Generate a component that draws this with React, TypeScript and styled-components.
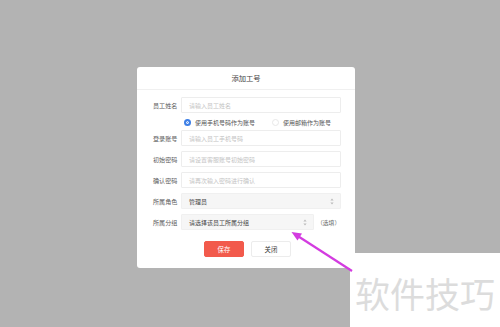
import React from 'react'
import styled, { createGlobalStyle } from 'styled-components'

const GlobalStyle = createGlobalStyle`
  html, body {
    margin: 0;
    padding: 0;
    width: 500px;
    height: 327px;
    overflow: hidden;
    background: #b3b3b3;
    font-family: "Noto Sans CJK SC", "Noto Sans", sans-serif;
  }
`

const Page = styled.div`
  position: relative;
  width: 500px;
  height: 327px;
  padding-top: 67px;
  padding-left: 137px;
  box-sizing: border-box;
`

const Dialog = styled.div`
  width: 218px;
  height: 201px;
  background: #fff;
  border-radius: 3px;
  display: flex;
  flex-direction: column;
`

const Header = styled.div`
  height: 22px;
  border-bottom: 1px solid #f0f0f0;
  display: flex;
  align-items: center;
  justify-content: center;
  font-size: 7.3px;
  color: #444;
`

const Body = styled.div`
  padding: 7px 14px 0 16px;
  display: flex;
  flex-direction: column;
  gap: 5px;
`

const Row = styled.div`
  display: grid;
  grid-template-columns: 28px 160px auto;
  align-items: center;
  height: 16px;
`

const Label = styled.div`
  font-size: 6.1px;
  color: #5c5c5c;
  white-space: nowrap;
`

const Input = styled.div`
  height: 16px;
  box-sizing: border-box;
  border: 1px solid #ededed;
  border-radius: 1px;
  padding-left: 7px;
  display: flex;
  align-items: center;
  font-size: 6px;
  color: #c4c4c4;
  white-space: nowrap;
`

const Select = styled(Input)<{ $short?: boolean }>`
  background: #f6f6f6;
  border-color: #f0f0f0;
  color: #444;
  justify-content: space-between;
  padding-right: 6px;
  width: ${p => (p.$short ? '133px' : '160px')};
`

const Extra = styled.div`
  font-size: 5.8px;
  color: #666;
  white-space: nowrap;
  margin-left: -24px;
`

const RadioRow = styled.div`
  display: flex;
  align-items: center;
  height: 10px;
  padding-left: 31px;
  margin: -1px 0 -2px;
`

const RadioItem = styled.div<{ $w?: number }>`
  display: flex;
  align-items: center;
  flex-shrink: 0;
  gap: 4px;
  font-size: 6px;
  color: #555;
  width: ${p => (p.$w ? `${p.$w}px` : 'auto')};
  white-space: nowrap;
`

const Dot = styled.span<{ $on?: boolean }>`
  width: 7px;
  height: 7px;
  box-sizing: border-box;
  border-radius: 50%;
  border: ${p => (p.$on ? '2px solid #3d7fe6' : '1px solid #e8e8e8')};
  background: ${p => (p.$on ? '#3d7fe6' : '#fff')};
  box-shadow: ${p => (p.$on ? 'inset 0 0 0 1px #fff' : 'none')};
`

const Footer = styled.div`
  display: flex;
  gap: 7px;
  padding-left: 67px;
  margin-top: 11px;
`

const Button = styled.div<{ $primary?: boolean }>`
  width: 40px;
  height: 16px;
  box-sizing: border-box;
  border-radius: 2px;
  display: flex;
  align-items: center;
  justify-content: center;
  font-size: 6.4px;
  background: ${p => (p.$primary ? '#f25a4c' : '#fff')};
  color: ${p => (p.$primary ? '#fff' : '#333')};
  border: 1px solid ${p => (p.$primary ? '#f25a4c' : '#ececec')};
`

const Watermark = styled.div`
  position: absolute;
  left: 350px;
  top: 253px;
  width: 150px;
  height: 74px;
  background: #fff;
  display: flex;
  align-items: center;
  justify-content: center;
  font-size: 35px;
  color: #dcdcdc;
  padding-top: 4px;
  box-sizing: border-box;
`

const ArrowLayer = styled.svg`
  position: absolute;
  left: 0;
  top: 0;
  pointer-events: none;
`

const Sorter = () => (
  <svg width="4" height="7" viewBox="0 0 4 7">
    <path d="M2 0.5 L3.6 2.6 H0.4 Z M2 6.5 L3.6 4.4 H0.4 Z" fill="#bbb" />
  </svg>
)

const App = () => (
  <>
    <GlobalStyle />
    <Page>
      <Dialog>
        <Header>添加工号</Header>
        <Body>
          <Row>
            <Label>员工姓名</Label>
            <Input>请输入员工姓名</Input>
          </Row>
          <RadioRow>
            <RadioItem $w={88}><Dot $on />使用手机号码作为账号</RadioItem>
            <RadioItem><Dot />使用邮箱作为账号</RadioItem>
          </RadioRow>
          <Row>
            <Label>登录账号</Label>
            <Input>请输入员工手机号码</Input>
          </Row>
          <Row>
            <Label>初始密码</Label>
            <Input>请设置客服账号初始密码</Input>
          </Row>
          <Row>
            <Label>确认密码</Label>
            <Input>请再次输入密码进行确认</Input>
          </Row>
          <Row>
            <Label>所属角色</Label>
            <Select>管理员<Sorter /></Select>
          </Row>
          <Row>
            <Label>所属分组</Label>
            <Select $short>请选择该员工所属分组<Sorter /></Select>
            <Extra>（选填）</Extra>
          </Row>
        </Body>
        <Footer>
          <Button $primary>保存</Button>
          <Button>关闭</Button>
        </Footer>
      </Dialog>
      <Watermark>软件技巧</Watermark>
      <ArrowLayer width="500" height="327" viewBox="0 0 500 327">
        <line x1="297" y1="235.5" x2="352" y2="271" stroke="#d33ce0" strokeWidth="2.2" />
        <path d="M291.5 232 L302 233.5 L297.5 240.5 Z" fill="#d33ce0" />
      </ArrowLayer>
    </Page>
  </>
)

export default App
